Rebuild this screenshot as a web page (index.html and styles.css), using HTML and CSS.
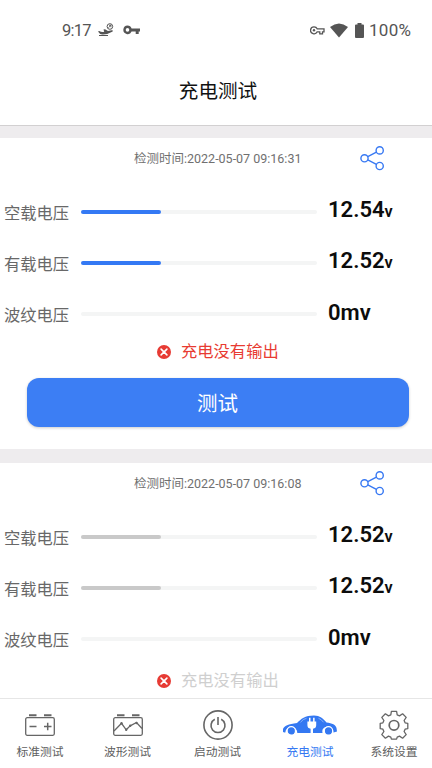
FILE: index.html
```html
<!DOCTYPE html>
<html lang="zh-CN">
<head>
<meta charset="utf-8">
<title>充电测试</title>
<link rel="stylesheet" href="styles.css">
</head>
<body>
<svg width="0" height="0" class="defs">
  <symbol id="share" viewBox="0 0 26 26"><g fill="none" stroke="#3879f3" stroke-width="1.4"><circle cx="5.5" cy="13.3" r="3.6"/><circle cx="20.7" cy="5.4" r="3.6"/><circle cx="20.7" cy="21" r="3.6"/><path d="M8.8 11.6l8.6-4.5M8.8 14.9l8.6 4.5"/></g></symbol>
  <symbol id="error" viewBox="0 0 14 14"><circle cx="7" cy="7" r="7" fill="#e73b34"/><path d="M4.1 4.1l5.8 5.8M9.9 4.1L4.1 9.9" stroke="#fff" stroke-width="1.6" stroke-linecap="round"/></symbol>
</svg>
<div class="status">
  <span class="clock">9:17</span>
  <svg class="plane" width="17" height="14" viewBox="0 0 17 14"><path d="M0 8.500l1.200-.5q2.500 1.500 5 .7L5.500 6.500l1.500-.3 3 1.900 3.500-.9c1.600-.3 2 .9.700 1.600q-5 3-10 2.700Q1.500 11.300 0 8.500zM1 12h9v1H1z" fill="#555"/><circle cx="11.900" cy="3.500" r="2.800" fill="#fff" stroke="#555" stroke-width="1"/><path d="M10.500 4.700l2.500-2.500m-2 .1h1.900v1.900" fill="none" stroke="#555" stroke-width=".9"/></svg>
  <svg class="key" width="17" height="10" viewBox="0 0 17 10"><path fill-rule="evenodd" d="M4.5.5a4.3 4.3 0 0 1 4.1 3H17v3h-1.3V9h-3V6.500H8.600A4.300 4.300 0 1 1 4.500.500zm0 2.600a1.800 1.800 0 1 0 0 3.600 1.800 1.800 0 0 0 0-3.600z" fill="#555"/></svg>
  <span class="spacer"></span>
  <svg class="vpn" width="15" height="9" viewBox="0 0 15 9"><path d="M4 .8a3.500 3.500 0 0 1 3.200 2H14v3h-1.500v2H9.800v-2H7.200A3.500 3.500 0 1 1 4 .8z" fill="none" stroke="#555" stroke-width="1.300"/><circle cx="4" cy="4.300" r="1.200" fill="#555"/></svg>
  <svg class="wifi" width="18" height="15" viewBox="0 0 18 15"><path d="M0 4Q9-3.200 18 4L9 14.500z" fill="#555"/></svg>
  <svg class="battery" width="9" height="15" viewBox="0 0 9 15"><path d="M2.500 0h4v1.500H8q1 0 1 1V14q0 1-1 1H1q-1 0-1-1V2.500q0-1 1-1h1.500z" fill="#555"/></svg>
  <span class="percent">100%</span>
</div>
<header>充电测试</header>
<main>
  <section class="card current">
    <div class="head"><time>检测时间:2022-05-07 09:16:31</time><svg class="share" width="26" height="26"><use href="#share"/></svg></div>
    <div class="row"><label>空载电压</label><div class="track"><div class="fill"></div></div><b>12.54<small>v</small></b></div>
    <div class="row"><label>有载电压</label><div class="track"><div class="fill"></div></div><b>12.52<small>v</small></b></div>
    <div class="row"><label>波纹电压</label><div class="track"></div><b>0mv</b></div>
    <div class="result"><svg width="14" height="14"><use href="#error"/></svg><span>充电没有输出</span></div>
    <button>测试</button>
  </section>
  <section class="card past">
    <div class="head"><time>检测时间:2022-05-07 09:16:08</time><svg class="share" width="26" height="26"><use href="#share"/></svg></div>
    <div class="row"><label>空载电压</label><div class="track"><div class="fill"></div></div><b>12.52<small>v</small></b></div>
    <div class="row"><label>有载电压</label><div class="track"><div class="fill"></div></div><b>12.52<small>v</small></b></div>
    <div class="row"><label>波纹电压</label><div class="track"></div><b>0mv</b></div>
    <div class="result"><svg width="14" height="14"><use href="#error"/></svg><span>充电没有输出</span></div>
  </section>
</main>
<nav>
  <a><svg width="32" height="30" viewBox="0 0 32 30"><g fill="none" stroke="#666" stroke-width="1.300"><rect x="1.700" y="7.700" width="28.600" height="17.600" rx="1.500"/><path d="M5 5.200h7.500M20 5.200h7.500" stroke-width="1.900"/><path d="M5.500 16.500h7M20 16.500h7.500M23.700 12.700v7.600" stroke-width="1.500"/></g></svg><span>标准测试</span></a>
  <a><svg width="32" height="30" viewBox="0 0 32 30"><g fill="none" stroke="#666" stroke-width="1.300"><rect x="1.700" y="7.700" width="28.600" height="17.600" rx="1.500"/><path d="M5 5.200h7.500M20 5.200h7.500" stroke-width="1.900"/><path d="M2 21l7.500-7.700 4.700 6.500 4-4 6.300-3.300 5.500 6"/></g><g fill="#666"><circle cx="9.500" cy="13.300" r="1.200"/><circle cx="14.200" cy="19.800" r="1.200"/><circle cx="18.200" cy="15.800" r="1.200"/><circle cx="24.500" cy="13" r="1.200"/></g></svg><span>波形测试</span></a>
  <a><svg width="32" height="30" viewBox="0 0 32 30"><g fill="none" stroke="#666" stroke-width="1.600"><circle cx="16" cy="15" r="14.100"/><path d="M12.800 9.300a7 7 0 1 0 6.400 0M16 7v8"/></g></svg><span>启动测试</span></a>
  <a class="active"><svg width="56" height="30" viewBox="0 0 56 30"><path d="M2.500 22.500L1 22v-3c1-3 5.500-5 14-6 4-4 8-7.500 17-7.500 6 0 9 3.200 12.500 7 5.500.5 9.500 2.500 10 5.500l.5 3.500-3.500 1a6 6 0 0 0-10.700-3.500 6 6 0 0 0-.3 4H15.300a6 6 0 0 0-12-.5z" fill="#3478f2"/><g fill="#3478f2" stroke="#fff" stroke-width="1.200"><circle cx="9.300" cy="20.900" r="4.200"/><circle cx="46.500" cy="20.900" r="4.200"/></g><path d="M27 7.800h1.500v3.700h2.600V7.800h1.500v3.700h1.600v3.700q0 3-3.200 3.500v4.300h-2.400v-4.300q-3.200-.5-3.200-3.500v-3.700H27z" fill="#fff"/><path d="M18.500 12.300q2.500-3.300 6-4M36.500 8.300q3 1 5 4" fill="none" stroke="#fff" stroke-opacity=".5" stroke-width=".8"/></svg><span>充电测试</span></a>
  <a><svg width="32" height="30" viewBox="0 0 32 30"><g fill="none" stroke="#666" stroke-width="1.300" stroke-linejoin="round"><path d="M13.400 1.400h5.200l.6 3.500 2.300 1 3.100-2.100 3.600 3.600-2.100 3.100 1 2.300 2.700.6v5.200l-2.700.6-1 2.300 2.100 3.100-3.600 3.600-3.100-2.100-2.300 1-.6 2h-5.200l-.6-2-2.300-1-3.100 2.100-3.600-3.600 2.100-3.100-1-2.300-2.700-.6v-5.200l2.700-.6 1-2.300-2.100-3.100 3.600-3.600 3.100 2.100 2.300-1z"/><circle cx="16" cy="15.300" r="4.800" stroke-width="1.700"/></g></svg><span>系统设置</span></a>
</nav>
</body>
</html>
```
FILE: styles.css
```css
* { box-sizing: border-box; }
body {
  margin: 0;
  width: 432px;
  height: 768px;
  overflow: hidden;
  display: flex;
  flex-direction: column;
  background: #fff;
  font-family: Roboto, "Noto Sans CJK SC", sans-serif;
}
svg { display: block; flex: none; }
.defs { position: absolute; }
.status {
  height: 60px;
  flex: none;
  display: flex;
  align-items: center;
  padding: 0 21px 0 62px;
  color: #555;
  font-size: 17px;
}
.clock { width: 36px; font-size: 16.5px; letter-spacing: -.8px; white-space: nowrap; }
.key { margin-left: 8px; }
.spacer { flex: 1; }
.wifi { margin-left: 5px; }
.battery { margin: 0 5px 0 7px; }
.percent { width: 42px; letter-spacing: .3px; white-space: nowrap; }
header {
  height: 66px;
  flex: none;
  padding-left: 4px;
  border-bottom: 1px solid #d2d0d1;
  text-align: center;
  font-size: 19.6px;
  line-height: 63px;
  color: #111;
}
main {
  flex: 1;
  min-height: 0;
  overflow: hidden;
  display: flex;
  flex-direction: column;
  gap: 14px;
  padding-top: 12px;
  background: #eeecee;
}
.card { flex: none; background: #fff; }
.current { height: 311px; }
.past { height: 260px; }
.head {
  height: 48px;
  display: grid;
  grid-template-columns: 134px 1fr 73px;
  align-items: start;
}
time {
  grid-column: 2;
  font-size: 12.5px;
  line-height: 42px;
  color: #707070;
  white-space: nowrap;
}
.share { margin-top: 7px; }
.row {
  height: 51px;
  display: grid;
  grid-template-columns: 76.500px 236px 1fr;
  align-items: center;
  padding-left: 4px;
}
.row label { margin-top: 5px; font-size: 16.3px; line-height: 24px; color: #686868; }
.track { height: 4px; border-radius: 2px; background: #f4f5f5; }
.fill { width: 80px; height: 4px; border-radius: 2px; background: #3479f4; }
.past .fill { background: #c9c9c9; }
.row b {
  padding-left: 11.500px;
  font-size: 22px;
  font-weight: 600;
  line-height: 26px;
  margin-top: -2px;
  color: #0c0c0c;
}
small { font-size: 16.3px; }
.result {
  height: 29px;
  display: flex;
  align-items: center;
  gap: 10px;
  padding-left: 157px;
  font-size: 16.3px;
  color: #e83b32;
}
.result svg { margin-top: -3px; }
.result span { margin-top: -3px; line-height: 24px; }
.past .result { height: 37px; color: #cfcfcf; }
button {
  display: block;
  width: 382px;
  height: 49px;
  margin: 10px 0 0 26.5px;
  padding: 0 0 2px;
  border: 0;
  border-radius: 12px;
  background: #3c7ef4;
  box-shadow: 0 1px 3px #0003;
  color: #fff;
  font-family: inherit;
  font-size: 20.5px;
}
nav {
  height: 70px;
  flex: none;
  display: grid;
  grid-template-columns: 80px 95px 85px 100px 68px;
  border-top: 1px solid #e6e6e6;
  background: #fff;
}
nav a {
  display: flex;
  flex-direction: column;
  align-items: center;
  padding-top: 11px;
  font-size: 11.8px;
  line-height: 24px;
  color: #606060;
}
nav .active { color: #3478f2; }
```
